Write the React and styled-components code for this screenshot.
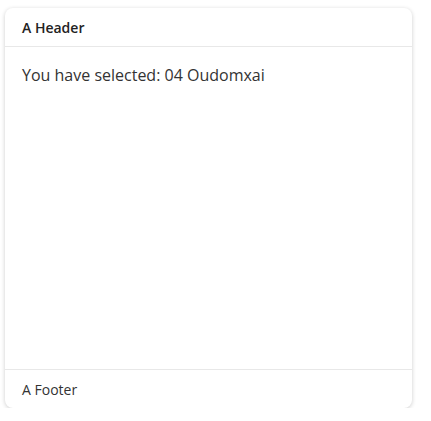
import styled, { createGlobalStyle } from "styled-components";

const Global = createGlobalStyle`
  html, body {
    margin: 0;
    padding: 0;
    background: #fff;
    font-family: "Open Sans", "Noto Sans", sans-serif;
  }
`;

const Page = styled.div`
  padding: 8px 19px 0 5px;
`;

const Card = styled.div`
  height: 400px;
  display: flex;
  flex-direction: column;
  background: #fff;
  border-radius: 8px;
  box-shadow: 0 1px 4px rgba(0, 0, 0, 0.2);
  overflow: hidden;
`;

const Header = styled.div`
  height: 39px;
  box-sizing: border-box;
  padding: 0 17px;
  display: flex;
  align-items: center;
  font-size: 14px;
  font-weight: 600;
  color: #222;
  border-bottom: 1px solid #e8e8e8;
`;

const Body = styled.div`
  flex: 1;
  padding: 16px 17px;
  font-size: 16px;
  line-height: 24px;
  color: #333;
`;

const Footer = styled.div`
  height: 39px;
  box-sizing: border-box;
  padding: 0 17px;
  display: flex;
  align-items: center;
  font-size: 14px;
  color: #333;
  border-top: 1px solid #e8e8e8;
`;

export default function App() {
  return (
    <Page>
      <Global />
      <Card>
        <Header>A Header</Header>
        <Body>You have selected: 04 Oudomxai</Body>
        <Footer>A Footer</Footer>
      </Card>
    </Page>
  );
}
